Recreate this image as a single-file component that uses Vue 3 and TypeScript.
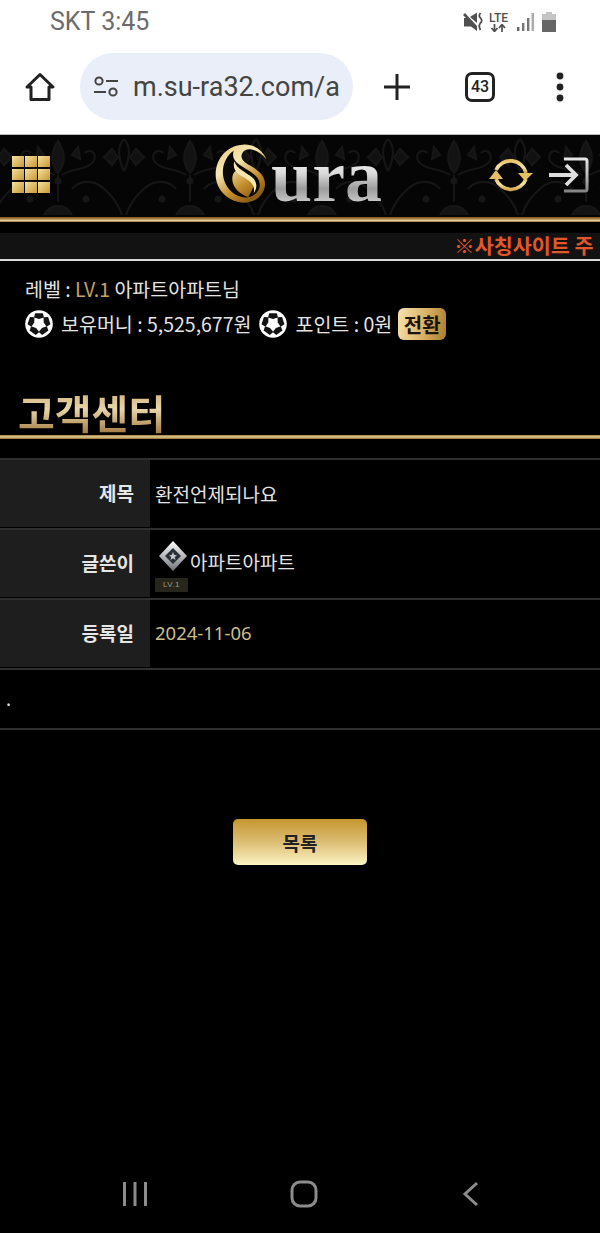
<script setup lang="ts">
const wallet = ['보유머니 : 5,525,677원', '포인트 : 0원']
const gridCells = Array.from({ length: 9 }, (_, i) => i)
const patches = [0, 72, 144, 216, 288]
</script>

<template>
  <div class="page">
    <div class="status">
      <span class="clock">SKT 3:45</span>
      <div class="statusIcons">
        <svg width="20" height="20" viewBox="0 0 20 20">
          <path d="M0 3 L2 1 L14 14 V19 L8 14.5 H1 V6 H3 Z" fill="#505050" />
          <path d="M7 5 L14 0.5 V11 Z" fill="#505050" />
          <path d="M17.5 1 q-2.5 3 0 5 q2.5 3 0 5 q-2.5 3 0 7" stroke="#505050" stroke-width="1.8" fill="none" />
        </svg>
        <div class="lte">
          <span>LTE</span>
          <svg width="17" height="8" viewBox="0 0 17 8">
            <path d="M4.5 0 V7 M1.5 4 L4.5 7.5 L7.5 4 M12 8 V1 M9 4 L12 .5 L15 4" stroke="#505050" stroke-width="1.7" fill="none" />
          </svg>
        </div>
        <svg width="17" height="18" viewBox="0 0 17 18">
          <rect x="0" y="14" width="2.4" height="4" fill="#666" />
          <rect x="5" y="10" width="2.4" height="8" fill="#777" />
          <rect x="10" y="5" width="2.4" height="13" fill="#777" />
          <rect x="14.6" y="0" width="2.4" height="18" fill="#aaa" />
        </svg>
        <svg width="14" height="20" viewBox="0 0 14 20">
          <path d="M4 0 H10 V2 H14 V20 H0 V2 H4 Z" fill="#c4c4c4" />
          <rect y="8" width="14" height="12" fill="#666" />
        </svg>
      </div>
    </div>

    <div class="toolbar">
      <svg class="homeIcon" width="30" height="30" viewBox="0 0 30 30">
        <path d="M15 2.5 L28 15 H24 V27.5 H6 V15 H2 Z" fill="none" stroke="#222" stroke-width="3" stroke-linejoin="round" />
      </svg>
      <div class="urlPill">
        <svg width="26" height="22" viewBox="0 0 26 22">
          <circle cx="6" cy="5" r="3.6" fill="none" stroke="#444" stroke-width="2" />
          <path d="M13 5 H25 M1 16 H13" stroke="#444" stroke-width="2.2" />
          <circle cx="20" cy="16" r="3.6" fill="none" stroke="#444" stroke-width="2" />
        </svg>
        <span class="url">m.su-ra32.com/as</span>
      </div>
      <svg class="plusIcon" width="28" height="28" viewBox="0 0 28 28">
        <path d="M14 1 V27 M1 14 H27" stroke="#222" stroke-width="3" />
      </svg>
      <div class="tabs">43</div>
      <svg class="menuIcon" width="10" height="30" viewBox="0 0 10 30">
        <circle cx="5" cy="4" r="3.4" fill="#222" />
        <circle cx="5" cy="15" r="3.4" fill="#222" />
        <circle cx="5" cy="26" r="3.4" fill="#222" />
      </svg>
    </div>

    <header class="siteHeader">
      <svg class="damask" width="600" height="82">
        <defs>
          <pattern id="damask" width="132" height="82" patternUnits="userSpaceOnUse" x="-8">
            <g fill="none" stroke="#161616" stroke-width="2">
              <path d="M66 6 C58 18 58 28 66 38 C74 28 74 18 66 6 Z" fill="#131313" />
              <path d="M62 40 C50 32 38 36 30 26 C27 18 34 13 39 18" />
              <path d="M70 40 C82 32 94 36 102 26 C105 18 98 13 93 18" />
              <path d="M66 40 V66" />
              <path d="M52 54 C46 46 32 44 22 52 C12 60 6 68 2 80" />
              <path d="M80 54 C86 46 100 44 110 52 C120 60 126 68 130 80" />
              <path d="M0 4 C8 12 5 26 0 36 M132 4 C124 12 127 26 132 36" />
              <path d="M46 12 L52 20 L44 24 Z M86 12 L80 20 L88 24 Z" fill="#121212" />
              <path d="M12 14 L20 22 L12 30 L6 22 Z M120 14 L126 22 L120 30 L112 22 Z" fill="#111" />
              <path d="M52 80 C58 68 74 68 80 80" fill="#131313" />
              <circle cx="66" cy="46" r="2.5" fill="#191919" />
              <circle cx="38" cy="64" r="2.5" fill="#171717" />
              <circle cx="94" cy="64" r="2.5" fill="#171717" />
            </g>
          </pattern>
        </defs>
        <rect width="600" height="82" fill="url(#damask)" />
      </svg>
      <div class="gridIcon">
        <i v-for="c in gridCells" :key="c" />
      </div>
      <div class="logo">
        <svg width="58" height="62" viewBox="45 25 170 186">
          <defs>
            <linearGradient id="swirl" x1="0" y1="0" x2="0.6" y2="1">
              <stop offset="0" stop-color="#e9c877" />
              <stop offset="0.4" stop-color="#f6e7b6" />
              <stop offset="0.75" stop-color="#c48d2c" />
              <stop offset="1" stop-color="#8a5d16" />
            </linearGradient>
          </defs>
          <path d="M130 30 C82 32 47 72 48 122 C49 168 90 204 132 204 C168 204 194 180 196 150 C197 124 178 108 150 92 C128 80 118 66 132 50 C146 36 178 46 200 74 C188 44 160 28 130 30 Z" fill="url(#swirl)" />
          <path d="M102 48 C72 68 60 112 78 148 C92 176 122 192 146 188 C120 178 100 160 98 136 C97 116 108 100 124 112 C136 122 156 130 160 150 C162 166 150 176 146 188 C168 182 182 166 180 148 C178 126 158 114 138 102 C112 88 94 74 102 48 Z" fill="#0a0805" />
          <path d="M104 80 C112 104 138 112 160 130 C172 142 174 160 162 176 C168 150 150 138 130 126 C110 116 98 102 104 80 Z" fill="#f6e6b2" />
        </svg>
        <span class="logoText">ura</span>
      </div>
      <div class="headerActions">
        <svg width="46" height="38" viewBox="0 0 46 38">
          <defs>
            <linearGradient id="goldIcon" x1="0" y1="0" x2="0" y2="1">
              <stop offset="0" stop-color="#e8c36a" />
              <stop offset="0.5" stop-color="#f5e3a6" />
              <stop offset="1" stop-color="#d5a94e" />
            </linearGradient>
          </defs>
          <path d="M8 14 A16 16 0 0 1 38 17" fill="none" stroke="url(#goldIcon)" stroke-width="3.6" />
          <path d="M8 23 A16 16 0 0 0 38 23" fill="none" stroke="url(#goldIcon)" stroke-width="3.6" />
          <path d="M30 17 H45 L37 25 Z" fill="#e6bf62" />
          <path d="M1 23 H15 L8 14 Z" fill="#e6bf62" />
        </svg>
        <svg width="40" height="36" viewBox="0 0 40 36">
          <defs>
            <linearGradient id="silverIcon" x1="0" y1="0" x2="0" y2="1">
              <stop offset="0" stop-color="#e6e6e6" />
              <stop offset="0.5" stop-color="#bcbcbc" />
              <stop offset="1" stop-color="#858585" />
            </linearGradient>
          </defs>
          <path d="M15 2 H36 Q38 2 38 4 V32 Q38 34 36 34 H15" fill="none" stroke="url(#silverIcon)" stroke-width="3" />
          <path d="M0 18 H26 M17 8 L27 18 L17 28" fill="none" stroke="#dedede" stroke-width="3.8" />
        </svg>
      </div>
    </header>
    <div class="goldLine" />

    <div class="notice">※사칭사이트 주</div>

    <section class="account">
      <div class="accountLine">레벨 : <span class="level">LV.1</span> 아파트아파트님</div>
      <div class="wallet">
        <template v-for="item in wallet" :key="item">
          <svg class="ball" width="28" height="28" viewBox="-14 -14 28 28">
            <circle r="13.8" fill="#fff" />
            <path
              v-for="deg in patches"
              :key="deg"
              d="M-3.8 -10.8 L3.8 -10.8 L5 -6.4 L0 -5 L-5 -6.4 Z"
              fill="#141414"
              :transform="`rotate(${deg})`"
            />
          </svg>
          <span class="walletText">{{ item }}</span>
        </template>
        <button class="swapBtn">전환</button>
      </div>
    </section>

    <h1 class="pageTitle"><span>고객센터</span></h1>
    <div class="titleLine" />

    <div class="board">
      <div class="row">
        <div class="rowLabel">제목</div>
        <div class="rowValue">환전언제되나요</div>
      </div>
      <div class="row">
        <div class="rowLabel">글쓴이</div>
        <div class="rowValue writer">
          <div class="writerName">
            <svg width="30" height="32" viewBox="0 0 30 32">
              <defs>
                <linearGradient id="rank" x1="0" y1="0" x2="0" y2="1">
                  <stop offset="0" stop-color="#fff" />
                  <stop offset="1" stop-color="#6f7378" />
                </linearGradient>
              </defs>
              <path d="M15 1 L29 16 L15 31 L1 16 Z" fill="url(#rank)" />
              <path d="M15 8 L23 16 L15 24 L7 16 Z" fill="#2a3038" />
              <path d="M15 12 L16.2 15 L19 15.3 L16.8 17 L17.5 20 L15 18.3 L12.5 20 L13.2 17 L11 15.3 L13.8 15 Z" fill="#c4c8cc" />
            </svg>
            <span>아파트아파트</span>
          </div>
          <span class="levelTag">LV.1</span>
        </div>
      </div>
      <div class="row">
        <div class="rowLabel">등록일</div>
        <div class="rowValue date">2024-11-06</div>
      </div>
      <div class="content">.</div>
    </div>

    <button class="listBtn">목록</button>

    <nav class="softKeys">
      <svg width="26" height="26" viewBox="0 0 26 26">
        <path d="M2.5 1 V25 M13 1 V25 M23.5 1 V25" stroke="#8c8c8c" stroke-width="3" />
      </svg>
      <svg width="28" height="28" viewBox="0 0 28 28">
        <rect x="2" y="2" width="24" height="24" rx="8" fill="none" stroke="#8c8c8c" stroke-width="3" />
      </svg>
      <svg class="backKey" width="18" height="26" viewBox="0 0 18 26">
        <path d="M15 2 L3 13 L15 24" fill="none" stroke="#8c8c8c" stroke-width="3" />
      </svg>
    </nav>
  </div>
</template>

<style>
html,
body {
  margin: 0;
  background: #000;
}
</style>

<style scoped>
.page {
  width: 600px;
  height: 1233px;
  background: #000;
  display: flex;
  flex-direction: column;
  overflow: hidden;
  font-family: "Noto Sans CJK KR", "Noto Sans", sans-serif;
  color: #e4e4e4;
}
.status {
  height: 43px;
  background: #fff;
  display: flex;
  align-items: center;
  justify-content: space-between;
  padding: 0 44px 0 50px;
  flex-shrink: 0;
}
.clock {
  font-family: Roboto, sans-serif;
  font-size: 25px;
  color: #6c6c6c;
}
.statusIcons {
  display: flex;
  align-items: center;
}
.lte {
  display: flex;
  flex-direction: column;
  align-items: center;
  width: 19px;
  margin: 0 9px 0 6px;
  font-family: Roboto, sans-serif;
  font-size: 12px;
  font-weight: 500;
  line-height: 12px;
  color: #505050;
}
.lte svg {
  display: block;
}
.statusIcons > svg:last-child {
  margin-left: 8px;
}
.toolbar {
  height: 87px;
  padding: 0 0 4px 25px;
  background: #fff;
  border-bottom: 1px solid #bdbdbd;
  display: flex;
  align-items: center;
  flex-shrink: 0;
}
.homeIcon {
  flex-shrink: 0;
}
.urlPill {
  width: 273px;
  height: 67px;
  margin-left: 25px;
  border-radius: 34px;
  background: #e9eef8;
  display: flex;
  align-items: center;
  padding-left: 13px;
  box-sizing: border-box;
  gap: 14px;
  flex-shrink: 0;
}
.url {
  font-family: Roboto, sans-serif;
  font-size: 27px;
  color: #444;
  width: 206px;
  overflow: hidden;
  white-space: nowrap;
}
.plusIcon {
  margin-left: 30px;
  flex-shrink: 0;
}
.tabs {
  width: 24px;
  height: 24px;
  margin-left: 54px;
  border: 3px solid #222;
  border-radius: 7px;
  font-family: Roboto, sans-serif;
  font-size: 16px;
  font-weight: 500;
  color: #222;
  display: flex;
  align-items: center;
  justify-content: center;
  flex-shrink: 0;
}
.menuIcon {
  margin-left: 60px;
  flex-shrink: 0;
}
.siteHeader {
  height: 82px;
  background: #050505;
  position: relative;
  display: flex;
  align-items: center;
  justify-content: center;
  flex-shrink: 0;
}
.damask {
  position: absolute;
  left: 0;
  top: 0;
}
.gridIcon {
  position: absolute;
  left: 12px;
  top: 21px;
  display: grid;
  grid-template-columns: repeat(3, 12px);
  grid-auto-rows: 11px;
  column-gap: 1px;
  row-gap: 2px;
}
.gridIcon i {
  background: linear-gradient(135deg, #f5e2a0, #c79833);
}
.logo {
  position: relative;
  display: flex;
  align-items: flex-end;
  margin: -4px 0 0 -4px;
}
.logoText {
  font-family: "Liberation Serif", serif;
  font-size: 74px;
  font-weight: 700;
  line-height: 58px;
  background: linear-gradient(180deg, #fff 0%, #dcdcdc 45%, #9c9c9c 72%, #d2d2d2 100%);
  -webkit-background-clip: text;
  background-clip: text;
  color: transparent;
  margin-left: -1px;
}
.headerActions {
  position: absolute;
  right: 11px;
  top: 21px;
  display: flex;
  align-items: center;
  gap: 15px;
}
.goldLine {
  height: 5px;
  background: linear-gradient(180deg, #7a4f1e 0%, #b08a4a 40%, #e6cf9c 70%, #8f6c3c 100%);
  flex-shrink: 0;
}
.notice {
  margin-top: 11px;
  height: 26px;
  background: #121212;
  border-bottom: 2px solid #d8d8d8;
  padding-left: 454px;
  font-size: 20.7px;
  font-weight: 700;
  line-height: 24px;
  color: #e2572a;
  white-space: nowrap;
  flex-shrink: 0;
}
.account {
  padding: 15px 0 0 25px;
  font-size: 19.5px;
  line-height: 26px;
  flex-shrink: 0;
}
.level {
  color: #c8a063;
}
.wallet {
  display: flex;
  align-items: center;
  margin-top: 6px;
}
.ball {
  margin-right: 8px;
  flex-shrink: 0;
}
.walletText {
  margin-right: 8px;
}
.swapBtn {
  width: 48px;
  height: 32px;
  margin-left: -2px;
  padding: 0;
  border: none;
  border-radius: 6px;
  background: linear-gradient(100deg, #f6e3ae 0%, #d9b166 55%, #a87c2a 100%);
  font-family: inherit;
  font-size: 20px;
  font-weight: 700;
  color: #1b1408;
}
.pageTitle {
  margin: 49px 0 0;
  padding-left: 18px;
  font-size: 40px;
  font-weight: 700;
  line-height: 46px;
  flex-shrink: 0;
}
.pageTitle span {
  background: linear-gradient(180deg, #c9a468 0%, #e8d5a8 45%, #8e5f22 100%);
  -webkit-background-clip: text;
  background-clip: text;
  color: transparent;
}
.titleLine {
  height: 4px;
  background: linear-gradient(180deg, #a98444, #e0c88f, #8f6d33);
  flex-shrink: 0;
}
.board {
  margin-top: 19px;
  flex-shrink: 0;
}
.row {
  height: 68px;
  border-top: 2px solid #2f2f2f;
  display: flex;
}
.rowLabel {
  width: 150px;
  height: 67px;
  box-sizing: border-box;
  padding: 0 16px 2px 0;
  background: #1e1e1e;
  display: flex;
  align-items: center;
  justify-content: flex-end;
  font-size: 19px;
  font-weight: 700;
  color: #e6e6e6;
}
.rowValue {
  padding: 0 0 2px 5px;
  display: flex;
  align-items: center;
  font-size: 19px;
}
.date {
  padding-bottom: 4px;
  font-family: "Noto Sans", Roboto, sans-serif;
  font-size: 18.5px;
  color: #cdbd8c;
}
.writer {
  flex-direction: column;
  align-items: flex-start;
  justify-content: flex-start;
  padding-top: 7px;
}
.writerName {
  display: flex;
  align-items: flex-end;
  padding-left: 3px;
  gap: 2px;
  height: 35px;
  line-height: 20px;
}
.levelTag {
  width: 33px;
  height: 14px;
  margin-top: 6px;
  background: #26261c;
  color: #9a9a80;
  font-family: "Liberation Sans", sans-serif;
  font-size: 8px;
  line-height: 14px;
  text-align: center;
  letter-spacing: 0.5px;
}
.content {
  height: 58px;
  border-top: 2px solid #2f2f2f;
  border-bottom: 2px solid #2f2f2f;
  padding-left: 6px;
  font-size: 18px;
  line-height: 56px;
}
.listBtn {
  width: 134px;
  height: 46px;
  margin: 89px auto 0;
  padding: 0;
  border: none;
  border-radius: 5px;
  background: linear-gradient(180deg, #c4962f 0%, #dcbd73 50%, #fdf4c4 100%);
  font-family: inherit;
  font-size: 19px;
  font-weight: 700;
  color: #222;
  flex-shrink: 0;
}
.softKeys {
  margin-top: auto;
  height: 78px;
  padding-left: 122px;
  display: flex;
  align-items: center;
  gap: 142px;
  flex-shrink: 0;
}
.backKey {
  margin-left: 2px;
}
</style>
